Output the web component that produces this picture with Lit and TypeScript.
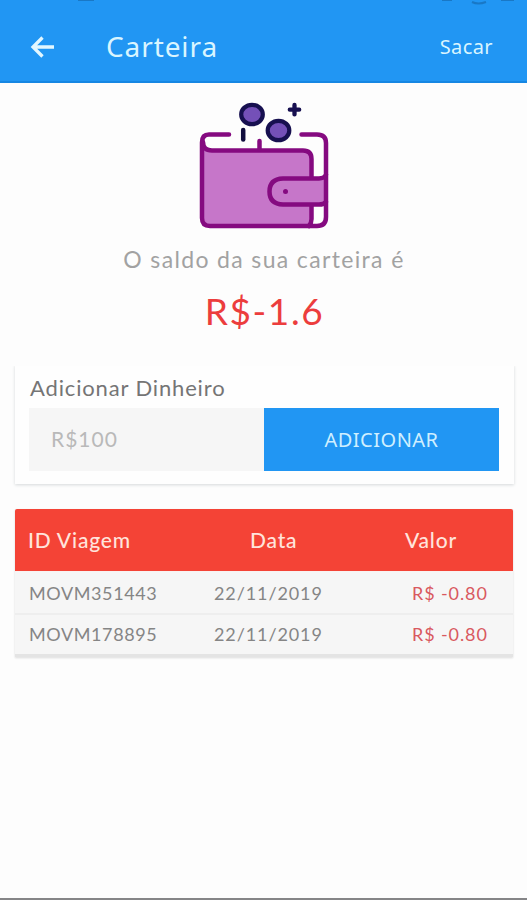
import { LitElement, html, css } from "lit";
import { customElement } from "lit/decorators.js";

interface Trip {
  id: string;
  date: string;
  value: string;
}

@customElement("wallet-art")
class WalletArt extends LitElement {
  static styles = css`
    :host, svg { display: block; }
  `;

  render() {
    return html`
      <svg width="136" height="132" viewBox="196 99 136 132" fill="none" stroke-linecap="round" stroke-linejoin="round">
        <path d="M204 150H304Q312 150 312 159V226H208Q202 226 202 219V143Z" fill="#c676c9" />
        <g stroke="#850a80" stroke-width="4.500">
          <path d="M203 142Q203 150.500 212 150.500H303Q311.500 150.500 311.500 159V219Q311.500 223 309 226" />
          <path d="M259.500 141V149" />
          <path d="M326 175Q324 178.500 319 178.500H283Q269.500 179 269.500 191.500Q269.500 204 283 204.500H319Q324 204.500 326 202" fill="#c676c9" />
          <path d="M229 134.500H209Q202 134.500 202 142.500V218Q202 226 210 226H317Q326 226 326 217V143Q326 134.500 317 134.500H301.500" />
        </g>
        <circle cx="285.500" cy="191.500" r="2.500" fill="#850a80" />
        <g stroke="#171050" stroke-width="4.200" fill="#7450b8">
          <ellipse cx="252" cy="114.500" rx="10.800" ry="9.700" />
          <ellipse cx="278.500" cy="130.500" rx="10.800" ry="9.700" />
        </g>
        <path d="M243.200 130V139.500" stroke="#100d3d" stroke-width="4.500" />
        <path d="M294.500 105V114.400M289.800 109.700H299.200" stroke="#171050" stroke-width="4.300" />
      </svg>
    `;
  }
}

@customElement("app-root")
class AppRoot extends LitElement {
  static styles = css`
    :host {
      display: flex;
      flex-direction: column;
      box-sizing: border-box;
      height: 900px;
      overflow: hidden;
      background: #fdfdfd;
      border-bottom: 2px solid #858587;
      font-family: Lato, "Noto Sans", sans-serif;
      white-space: nowrap;
    }
    header {
      flex: none;
      box-sizing: border-box;
      height: 83px;
      padding: 11px 34px 0 29px;
      display: flex;
      align-items: center;
      background: #2196f3;
      border-bottom: 2px solid #1687e3;
      color: #d9f5ff;
      font-family: "Noto Sans", sans-serif;
      position: relative;
    }
    .status { position: absolute; top: 0; left: 0; }
    .back { display: block; margin-top: 2px; color: #e2f7ff; }
    h1 { margin: 0 auto 0 50px; font-size: 28px; line-height: 36px; font-weight: 400; letter-spacing: 0.9px; }
    .withdraw { font-size: 20px; line-height: 26px; letter-spacing: 0.4px; padding-top: 1px; }
    .balance { flex: none; height: 282px; display: flex; flex-direction: column; align-items: center; }
    wallet-art { margin-top: 16px; }
    .caption { margin: 13px 0 0 1px; font-size: 23px; line-height: 30px; letter-spacing: 1.35px; color: #a2a2a2; }
    .amount { margin: 15px 0 0 2px; font-size: 37px; line-height: 44px; letter-spacing: 1.6px; color: #ec3d3d; }
    .add {
      flex: none;
      box-sizing: border-box;
      height: 119px;
      margin: 0 13px 0 15px;
      padding: 8px 15px 0 14px;
      background: #fefefe;
      box-shadow: 0 1px 3px #d5d8da;
      clip-path: inset(1px -4px -5px -4px);
    }
    .label { font-size: 22px; line-height: 30px; letter-spacing: 0.85px; color: #757575; padding-left: 1px; }
    .form { display: grid; grid-template-columns: 235px 235px; height: 63px; margin-top: 5px; }
    .field { box-sizing: border-box; background: #f6f6f6; padding: 0 0 3px 22px; display: flex; align-items: center; font-size: 21px; letter-spacing: 1px; color: #b9b9b9; }
    .submit { border: 0; border-radius: 0; padding: 0; background: #2196f3; color: #cfefff; font: 400 20px "Noto Sans", sans-serif; letter-spacing: 0.5px; }
    .trips { flex: none; margin: 25px 14px 0 15px; background: #f6f6f6; box-shadow: 0 1px 2px #dcdcdc; border-bottom: 3px solid #e4e4e4; }
    .row { box-sizing: border-box; display: grid; grid-template-columns: 185px 1fr 101px; align-items: center; height: 41px; padding: 0 0 2px 14px; border-top: 2px solid #eeeeee; font-size: 18px; letter-spacing: 0.9px; color: #858585; }
    .row > :first-child { letter-spacing: 0.6px; }
    .head { grid-template-columns: 222px 1fr 108px; height: 62px; padding: 0 0 2px 13px; border: 0; background: #f44336; color: #ffe4dc; font-size: 21px; font-weight: 500; letter-spacing: 0.8px; border-radius: 2px 2px 0 0; }
    .head > :first-child { letter-spacing: 0.8px; }
    .row.head + .row { border-top: 1px solid #f9f3f2; height: 42px; padding-bottom: 0; }
    .value { color: #d9595f; }
  `;

  private trips: Trip[] = [
    { id: "MOVM351443", date: "22/11/2019", value: "R$ -0.80" },
    { id: "MOVM178895", date: "22/11/2019", value: "R$ -0.80" },
  ];

  render() {
    return html`
      <header>
        <svg class="status" width="527" height="5" fill="none" stroke="#1978c6" stroke-width="2">
          <path d="M78 0H94M442 0H452M472 2Q478 5 486 2M501 0H514" />
        </svg>
        <svg class="back" width="27" height="24" viewBox="0 0 27 24" fill="none" stroke="currentColor" stroke-width="3.300">
          <path d="M13.500 2.500L4 12L13.500 21.500M4 12H25" />
        </svg>
        <h1>Carteira</h1>
        <span class="withdraw">Sacar</span>
      </header>
      <section class="balance">
        <wallet-art></wallet-art>
        <span class="caption">O saldo da sua carteira é</span>
        <span class="amount">R$-1.6</span>
      </section>
      <section class="add">
        <div class="label">Adicionar Dinheiro</div>
        <div class="form">
          <div class="field">R$100</div>
          <button class="submit">ADICIONAR</button>
        </div>
      </section>
      <section class="trips">
        <div class="row head"><span>ID Viagem</span><span>Data</span><span>Valor</span></div>
        ${this.trips.map(
          (trip) => html`<div class="row">
            <span>${trip.id}</span><span>${trip.date}</span><span class="value">${trip.value}</span>
          </div>`
        )}
      </section>
    `;
  }
}
